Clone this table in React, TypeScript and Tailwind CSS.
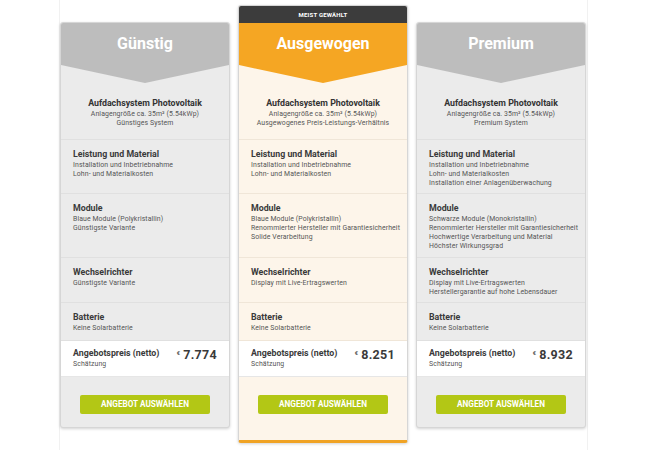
import React from "react";

type Row = { title: string; lines: string[]; h: string };

type Plan = {
  name: string;
  sub: string;
  price: string;
  featured?: boolean;
  rows: Row[];
};

const plans: Plan[] = [
  {
    name: "Günstig",
    sub: "Günstiges System",
    price: "7.774",
    rows: [
      { title: "Leistung und Material", lines: ["Installation und Inbetriebnahme", "Lohn- und Materialkosten"], h: "h-[54px]" },
      { title: "Module", lines: ["Blaue Module (Polykristallin)", "Günstigste Variante"], h: "h-[64px]" },
      { title: "Wechselrichter", lines: ["Günstigste Variante"], h: "h-[45px]" },
      { title: "Batterie", lines: ["Keine Solarbatterie"], h: "h-[38px]" },
    ],
  },
  {
    name: "Ausgewogen",
    sub: "Ausgewogenes Preis-Leistungs-Verhältnis",
    price: "8.251",
    featured: true,
    rows: [
      { title: "Leistung und Material", lines: ["Installation und Inbetriebnahme", "Lohn- und Materialkosten"], h: "h-[54px]" },
      { title: "Module", lines: ["Blaue Module (Polykristallin)", "Renommierter Hersteller mit Garantiesicherheit", "Solide Verarbeitung"], h: "h-[64px]" },
      { title: "Wechselrichter", lines: ["Display mit Live-Ertragswerten"], h: "h-[45px]" },
      { title: "Batterie", lines: ["Keine Solarbatterie"], h: "h-[38px]" },
    ],
  },
  {
    name: "Premium",
    sub: "Premium System",
    price: "8.932",
    rows: [
      { title: "Leistung und Material", lines: ["Installation und Inbetriebnahme", "Lohn- und Materialkosten", "Installation einer Anlagenüberwachung"], h: "h-[54px]" },
      { title: "Module", lines: ["Schwarze Module (Monokristallin)", "Renommierter Hersteller mit Garantiesicherheit", "Hochwertige Verarbeitung und Material", "Höchster Wirkungsgrad"], h: "h-[64px]" },
      { title: "Wechselrichter", lines: ["Display mit Live-Ertragswerten", "Herstellergarantie auf hohe Lebensdauer"], h: "h-[45px]" },
      { title: "Batterie", lines: ["Keine Solarbatterie"], h: "h-[38px]" },
    ],
  },
];

const PlanCard = ({ plan }: { plan: Plan }) => {
  const f = plan.featured;
  const line = f ? "border-[#f0e6d8]" : "border-[#e0e0e0]";
  return (
    <div
      className={`w-[170px] flex flex-col rounded-[3px] overflow-hidden shadow-[0_1px_3px_rgba(0,0,0,0.18)] border border-[#d6d6d6] ${
        f ? "mt-[5px] bg-[#fdf5ea] border-b-[3px] border-b-[#f0a324]" : "mt-[22px] bg-[#ebebeb]"
      }`}
    >
      {f && (
        <div className="h-[17px] bg-[#3c3c3c] text-white text-[6px] font-bold flex items-center justify-center tracking-[0.2px]">
          MEIST GEWÄHLT
        </div>
      )}
      {/* kopf mit pfeil */}
      <div
        className={`h-[60px] flex justify-center pt-[9px] text-white text-[16px] font-bold [clip-path:polygon(0_0,100%_0,100%_70%,50%_100%,0_70%)] ${
          f ? "bg-[#f5a623]" : "bg-[#bdbdbd]"
        }`}
      >
        {plan.name}
      </div>
      <div className={`h-[57px] text-center pt-[14px] border-b ${line}`}>
        <div className="text-[8.8px] font-bold text-[#333] leading-[12px]">Aufdachsystem Photovoltaik</div>
        <div className="text-[6.9px] tracking-[0.1px] text-[#555] leading-[9px] mt-[1px]">Anlagengröße ca. 35m² (5.54kWp)</div>
        <div className="text-[6.9px] tracking-[0.1px] text-[#555] leading-[9px]">{plan.sub}</div>
      </div>
      {plan.rows.map((r) => (
        <div key={r.title} className={`${r.h} px-[12px] pt-[8px] border-b ${line}`}>
          <div className="text-[8.8px] font-bold text-[#3a3a3a] leading-[12px]">{r.title}</div>
          <div className="mt-[1px]">
            {r.lines.map((l) => (
              <div key={l} className="text-[6.9px] tracking-[0.1px] text-[#555] leading-[9px] whitespace-nowrap">
                {l}
              </div>
            ))}
          </div>
        </div>
      ))}
      <div className="h-[36px] bg-white px-[12px] pt-[6px] flex justify-between border-b border-[#e6e6e6]">
        <div>
          <div className="text-[8.8px] font-bold text-[#3a3a3a] leading-[12px]">Angebotspreis (netto)</div>
          <div className="text-[6.9px] tracking-[0.1px] text-[#555] leading-[10px]">Schätzung</div>
        </div>
        <div className="flex items-start text-[#3a3a3a]">
          <span className="text-[6px] mt-[1px] mr-[3px]">€</span>
          <span className="text-[12.5px] font-bold leading-[15px] tracking-[0.3px]">{plan.price}</span>
        </div>
      </div>
      <div className={`flex justify-center pt-[18px] ${f ? "pb-[26px]" : "pb-[13px]"}`}>
        <div className="w-[130px] h-[19px] rounded-[2px] bg-[#b3c715] text-white text-[8.2px] font-bold flex items-center justify-center">
          ANGEBOT AUSWÄHLEN
        </div>
      </div>
    </div>
  );
};

export default function App() {
  return (
    <div className="w-[650px] h-[450px] bg-white overflow-hidden font-['Roboto',sans-serif]">
      <div className="ml-[59px] w-[529px] h-[450px] border-x border-[#f1f1f1] flex items-start gap-[8px]">
        {plans.map((p) => (
          <PlanCard key={p.name} plan={p} />
        ))}
      </div>
    </div>
  );
}
